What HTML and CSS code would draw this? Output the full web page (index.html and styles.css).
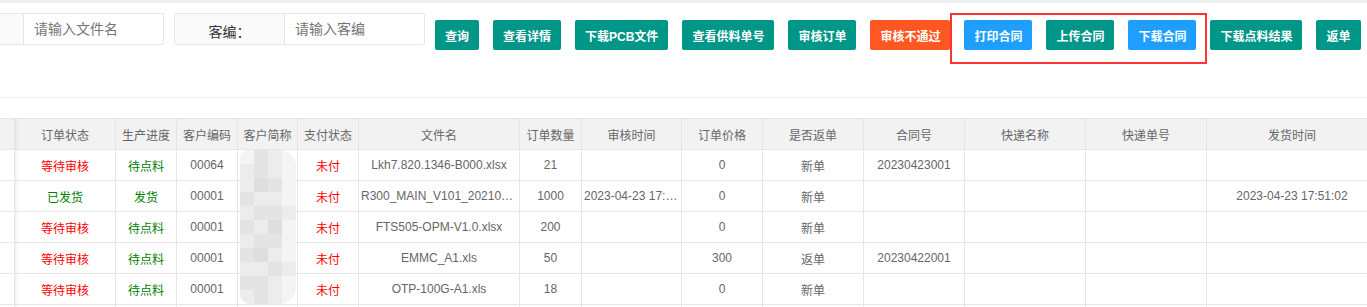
FILE: index.html
```html
<!DOCTYPE html>
<html>
<head>
    <meta charset="UTF-8">
    <title>订单管理</title>
    <link rel="stylesheet" href="styles.css">
</head>
<body>
  <div class="topbar"></div>

  <div class="toolbar">
    <div class="field field-first">
      <label class="field-label">文件名：</label>
      <div class="field-input">请输入文件名</div>
    </div>
    <div class="field">
      <label class="field-label">客编：</label>
      <div class="field-input">请输入客编</div>
    </div>

    <button class="btn first">查询</button>
    <button class="btn">查看详情</button>
    <button class="btn">下载PCB文件</button>
    <button class="btn">查看供料单号</button>
    <button class="btn">审核订单</button>
    <button class="btn btn-danger">审核不通过</button>
    <button class="btn btn-blue">打印合同</button>
    <button class="btn">上传合同</button>
    <button class="btn btn-blue">下载合同</button>
    <button class="btn">下载点料结果</button>
    <button class="btn">返单</button>

    <!-- annotation box drawn over the contract buttons -->
    <div class="mark"></div>
  </div>

  <div class="divider"></div>

  <div class="table-wrap">
    <table class="grid">
      <thead>
        <tr>
          <th class="c0"></th>
          <th class="c1">订单状态</th>
          <th class="c2">生产进度</th>
          <th class="c3">客户编码</th>
          <th class="c4">客户简称</th>
          <th class="c5">支付状态</th>
          <th class="c6">文件名</th>
          <th class="c7">订单数量</th>
          <th class="c8">审核时间</th>
          <th class="c9">订单价格</th>
          <th class="c10">是否返单</th>
          <th class="c11">合同号</th>
          <th class="c12">快递名称</th>
          <th class="c13">快递单号</th>
          <th class="c14">发货时间</th>
        </tr>
      </thead>
      <tbody>
        <tr>
          <td></td>
          <td class="red">等待审核</td>
          <td class="green">待点料</td>
          <td>00064</td>
          <td></td>
          <td class="red">未付</td>
          <td>Lkh7.820.1346-B000.xlsx</td>
          <td>21</td>
          <td></td>
          <td>0</td>
          <td>新单</td>
          <td>20230423001</td>
          <td></td>
          <td></td>
          <td></td>
        </tr>
        <tr>
          <td></td>
          <td class="green">已发货</td>
          <td class="green">发货</td>
          <td>00001</td>
          <td></td>
          <td class="red">未付</td>
          <td>R300_MAIN_V101_20210915.xlsx</td>
          <td>1000</td>
          <td>2023-04-23 17:51:02</td>
          <td>0</td>
          <td>新单</td>
          <td></td>
          <td></td>
          <td></td>
          <td>2023-04-23 17:51:02</td>
        </tr>
        <tr>
          <td></td>
          <td class="red">等待审核</td>
          <td class="green">待点料</td>
          <td>00001</td>
          <td></td>
          <td class="red">未付</td>
          <td>FTS505-OPM-V1.0.xlsx</td>
          <td>200</td>
          <td></td>
          <td>0</td>
          <td>新单</td>
          <td></td>
          <td></td>
          <td></td>
          <td></td>
        </tr>
        <tr>
          <td></td>
          <td class="red">等待审核</td>
          <td class="green">待点料</td>
          <td>00001</td>
          <td></td>
          <td class="red">未付</td>
          <td>EMMC_A1.xls</td>
          <td>50</td>
          <td></td>
          <td>300</td>
          <td>返单</td>
          <td>20230422001</td>
          <td></td>
          <td></td>
          <td></td>
        </tr>
        <tr>
          <td></td>
          <td class="red">等待审核</td>
          <td class="green">待点料</td>
          <td>00001</td>
          <td></td>
          <td class="red">未付</td>
          <td>OTP-100G-A1.xls</td>
          <td>18</td>
          <td></td>
          <td>0</td>
          <td>新单</td>
          <td></td>
          <td></td>
          <td></td>
          <td></td>
        </tr>
        <tr>
          <td></td><td></td><td></td><td></td><td></td><td></td><td></td><td></td>
          <td></td><td></td><td></td><td></td><td></td><td></td><td></td>
        </tr>
      </tbody>
    </table>

    <!-- mosaic hiding the customer names -->
    <div class="mosaic">
      <span class="m4"></span><span class="m2"></span><span class="m3"></span><span class="m4"></span>
      <span class="m3"></span><span class="m2"></span><span class="m3"></span><span class="m4"></span>
      <span class="m3"></span><span class="m1"></span><span class="m2"></span><span class="m4"></span>
      <span class="m2"></span><span class="m3"></span><span class="m3"></span><span class="m4"></span>
      <span class="m3"></span><span class="m2"></span><span class="m2"></span><span class="m3"></span>
      <span class="m2"></span><span class="m3"></span><span class="m1"></span><span class="m4"></span>
      <span class="m3"></span><span class="m2"></span><span class="m2"></span><span class="m4"></span>
      <span class="m2"></span><span class="m1"></span><span class="m3"></span><span class="m4"></span>
      <span class="m3"></span><span class="m3"></span><span class="m2"></span><span class="m3"></span>
      <span class="m2"></span><span class="m2"></span><span class="m3"></span><span class="m4"></span>
      <span class="m3"></span><span class="m2"></span><span class="m3"></span><span class="m4"></span>
    </div>
  </div>
</body>
</html>
```

FILE: styles.css
```css
html, body {
    margin: 0;
    height: 100%;
    overflow: hidden;
}
body {
    background-color: #fff;
    font-family: "Liberation Sans", "Noto Sans CJK SC", sans-serif;
    color: #666;
}

.topbar {
    height: 3px;
    background-color: #f0f0f0;
}

/* search + buttons */
.toolbar {
    position: relative;
    display: flex;
    align-items: flex-start;
    height: 94px;
    box-sizing: border-box;
    padding-top: 10px;
}
.field {
    display: flex;
    height: 32px;
    box-sizing: border-box;
    border: 1px solid #e6e6e6;
    border-radius: 2px;
    margin-left: 10px;
    flex: none;
}
.field-first {
    margin-left: -87px;
}
.field-label {
    width: 110px;
    box-sizing: border-box;
    background-color: #fafafa;
    border-right: 1px solid #e6e6e6;
    font-size: 14px;
    color: #333;
    text-align: center;
    padding-top: 8px;
    line-height: 20px;
}
.field-input {
    width: 139px;
    box-sizing: border-box;
    padding-left: 10px;
    font-size: 14px;
    color: #757575;
    line-height: 30px;
}

.btn {
    flex: none;
    height: 30px;
    margin-top: 7px;
    margin-left: 14px;
    padding: 0 10px;
    border: none;
    border-radius: 2px;
    background-color: #009688;
    color: #fff;
    font-family: "Liberation Sans", "Noto Sans CJK SC", sans-serif;
    font-size: 12px;
    font-weight: bold;
    white-space: nowrap;
}
.btn.first {
    margin-left: 10px;
}
.btn-danger {
    background-color: #ff5722;
}
.btn-blue {
    background-color: #1e9fff;
}

.mark {
    position: absolute;
    left: 950px;
    top: 10px;
    width: 257px;
    height: 51px;
    box-sizing: border-box;
    border: 2px solid #f33;
}

.divider {
    border-top: 1px solid #f0f0f0;
}

/* table */
.table-wrap {
    position: relative;
    margin-top: 20px;
}
.grid {
    width: 1377px;
    table-layout: fixed;
    border-collapse: separate;
    border-spacing: 0;
    border-top: 1px solid #e6e6e6;
    font-size: 12px;
}
.grid th, .grid td {
    box-sizing: border-box;
    height: 31px;
    padding: 0 2px;
    border-right: 1px solid #e6e6e6;
    border-bottom: 1px solid #e6e6e6;
    text-align: center;
    white-space: nowrap;
    overflow: hidden;
    text-overflow: ellipsis;
    color: #666;
}
.grid th {
    background-color: #f2f2f2;
    font-weight: normal;
}
.grid th:nth-child(2), .grid td:nth-child(2) {
    box-shadow: inset 5px 0 5px -5px rgba(0, 0, 0, 0.12);
}
.c0 { width: 15px; }
.c1 { width: 101px; }
.c2 { width: 61px; }
.c3 { width: 61px; }
.c4 { width: 60px; }
.c5 { width: 61px; }
.c6 { width: 161px; }
.c7 { width: 62px; }
.c8 { width: 100px; }
.c9 { width: 81px; }
.c10 { width: 101px; }
.c11 { width: 101px; }
.c12 { width: 121px; }
.c13 { width: 121px; }
.c14 { width: 171px; }

.grid td.red {
    color: #f00;
}
.grid td.green {
    color: #008000;
}

.mosaic {
    position: absolute;
    left: 240px;
    top: 32px;
    width: 56px;
    height: 154px;
    display: grid;
    grid-template-columns: repeat(4, 14px);
    grid-auto-rows: 14px;
    border-radius: 8px 16px 16px 10px;
    overflow: hidden;
}
.mosaic .m1 { background-color: #dedede; }
.mosaic .m2 { background-color: #e4e4e4; }
.mosaic .m3 { background-color: #ececec; }
.mosaic .m4 { background-color: #f4f4f4; }
```
